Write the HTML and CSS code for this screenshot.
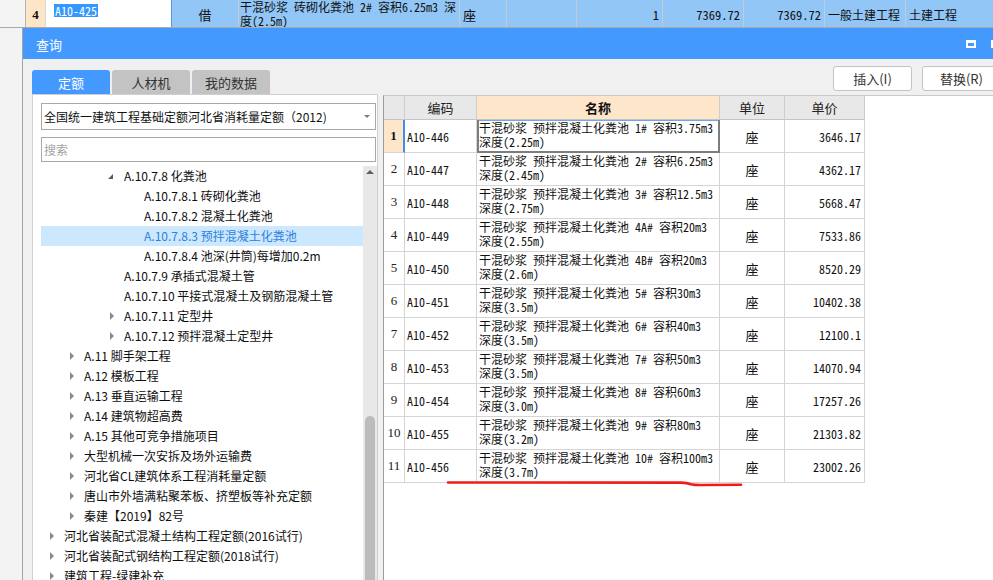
FILE: index.html
```html
<!DOCTYPE html>
<html lang="zh-CN">
<head>
<meta charset="utf-8">
<title>查询</title>
<link rel="stylesheet" href="styles.css">
</head>
<body>
<div class="toprow">
  <div class="tc t-gap"></div>
  <div class="tc t-num">4</div>
  <div class="tc t-code"><span class="sel">A10-425</span></div>
  <div class="tc t-blue t-center t-ui">借</div>
  <div class="tc t-blue t-name">干混砂浆 砖砌化粪池 2# 容积6.25m3 深<br>度(2.5m)</div>
  <div class="tc t-blue t-ui t-left">座</div>
  <div class="tc t-blue"></div>
  <div class="tc t-blue t-right">1</div>
  <div class="tc t-blue t-right">7369.72</div>
  <div class="tc t-blue t-right">7369.72</div>
  <div class="tc t-blue t-ui t-left t-sm">一般土建工程</div>
  <div class="tc t-blue t-ui t-left t-sm">土建工程</div>
</div>

<div class="dialog">
  <div class="titlebar">
    <span class="title">查询</span>
    <span class="maxi"></span>
    <span class="closex"></span>
  </div>
  <div class="dbody">
    <div class="leftcol">
      <div class="tabs">
        <div class="tab active">定额</div>
        <div class="tab">人材机</div>
        <div class="tab">我的数据</div>
      </div>
      <div class="lpanel">
        <div class="select">全国统一建筑工程基础定额河北省消耗量定额（2012)<span class="caret"></span></div>
        <div class="search">搜索</div>
        <div class="treewrap">
          <ul class="tree">
            <li class="l3"><span class="arr open"></span>A.10.7.8 化粪池</li>
            <li class="l4"><span class="arr"></span>A.10.7.8.1 砖砌化粪池</li>
            <li class="l4"><span class="arr"></span>A.10.7.8.2 混凝土化粪池</li>
            <li class="l4 cur"><span class="arr"></span>A.10.7.8.3 预拌混凝土化粪池</li>
            <li class="l4"><span class="arr"></span>A.10.7.8.4 池深(井筒)每增加0.2m</li>
            <li class="l3"><span class="arr"></span>A.10.7.9 承插式混凝土管</li>
            <li class="l3"><span class="arr"></span>A.10.7.10 平接式混凝土及钢筋混凝土管</li>
            <li class="l3"><span class="arr closed"></span>A.10.7.11 定型井</li>
            <li class="l3"><span class="arr closed"></span>A.10.7.12 预拌混凝土定型井</li>
            <li class="l1"><span class="arr closed"></span>A.11 脚手架工程</li>
            <li class="l1"><span class="arr closed"></span>A.12 模板工程</li>
            <li class="l1"><span class="arr closed"></span>A.13 垂直运输工程</li>
            <li class="l1"><span class="arr closed"></span>A.14 建筑物超高费</li>
            <li class="l1"><span class="arr closed"></span>A.15 其他可竞争措施项目</li>
            <li class="l1"><span class="arr closed"></span>大型机械一次安拆及场外运输费</li>
            <li class="l1"><span class="arr closed"></span>河北省CL建筑体系工程消耗量定额</li>
            <li class="l1"><span class="arr closed"></span>唐山市外墙满粘聚苯板、挤塑板等补充定额</li>
            <li class="l1"><span class="arr closed"></span>秦建【2019】82号</li>
            <li class="l0"><span class="arr closed"></span>河北省装配式混凝土结构工程定额(2016试行)</li>
            <li class="l0"><span class="arr closed"></span>河北省装配式钢结构工程定额(2018试行)</li>
            <li class="l0"><span class="arr closed"></span>建筑工程-绿建补充</li>
          </ul>
          <div class="vscroll"><span class="up"></span><span class="thumb"></span></div>
        </div>
      </div>
    </div>
    <div class="rightcol">
      <div class="btns">
        <button class="btn">插入(I)</button>
        <button class="btn">替换(R)</button>
      </div>
      <div class="rpanel">
        <div class="grid">
          <div class="h hn"></div>
          <div class="h">编码</div>
          <div class="h hname">名称</div>
          <div class="h">单位</div>
          <div class="h">单价</div>

          <div class="c rn rsel">1</div><div class="c code">A10-446</div><div class="c name focus">干混砂浆 预拌混凝土化粪池 1# 容积3.75m3<br>深度(2.25m)</div><div class="c unit">座</div><div class="c price">3646.17</div>
          <div class="c rn">2</div><div class="c code">A10-447</div><div class="c name">干混砂浆 预拌混凝土化粪池 2# 容积6.25m3<br>深度(2.45m)</div><div class="c unit">座</div><div class="c price">4362.17</div>
          <div class="c rn">3</div><div class="c code">A10-448</div><div class="c name">干混砂浆 预拌混凝土化粪池 3# 容积12.5m3<br>深度(2.75m)</div><div class="c unit">座</div><div class="c price">5668.47</div>
          <div class="c rn">4</div><div class="c code">A10-449</div><div class="c name">干混砂浆 预拌混凝土化粪池 4A# 容积20m3<br>深度(2.55m)</div><div class="c unit">座</div><div class="c price">7533.86</div>
          <div class="c rn">5</div><div class="c code">A10-450</div><div class="c name">干混砂浆 预拌混凝土化粪池 4B# 容积20m3<br>深度(2.6m)</div><div class="c unit">座</div><div class="c price">8520.29</div>
          <div class="c rn">6</div><div class="c code">A10-451</div><div class="c name">干混砂浆 预拌混凝土化粪池 5# 容积30m3<br>深度(3.5m)</div><div class="c unit">座</div><div class="c price">10402.38</div>
          <div class="c rn">7</div><div class="c code">A10-452</div><div class="c name">干混砂浆 预拌混凝土化粪池 6# 容积40m3<br>深度(3.5m)</div><div class="c unit">座</div><div class="c price">12100.1</div>
          <div class="c rn">8</div><div class="c code">A10-453</div><div class="c name">干混砂浆 预拌混凝土化粪池 7# 容积50m3<br>深度(3.5m)</div><div class="c unit">座</div><div class="c price">14070.94</div>
          <div class="c rn">9</div><div class="c code">A10-454</div><div class="c name">干混砂浆 预拌混凝土化粪池 8# 容积60m3<br>深度(3.0m)</div><div class="c unit">座</div><div class="c price">17257.26</div>
          <div class="c rn">10</div><div class="c code">A10-455</div><div class="c name">干混砂浆 预拌混凝土化粪池 9# 容积80m3<br>深度(3.2m)</div><div class="c unit">座</div><div class="c price">21303.82</div>
          <div class="c rn">11</div><div class="c code">A10-456</div><div class="c name">干混砂浆 预拌混凝土化粪池 10# 容积100m3<br>深度(3.7m)</div><div class="c unit">座</div><div class="c price">23002.26</div>
        </div>
      </div>
    </div>
  </div>
</div>

<svg class="redmark" width="310" height="12" viewBox="0 0 310 12">
  <path d="M7 4.5 L240 4.6 Q246 4.8 250 6.2 Q254 7.2 262 7 L300 6.8" fill="none" stroke="#f01c1c" stroke-width="2.6" stroke-linecap="round"/>
</svg>
</body>
</html>
```

FILE: styles.css
```css
* { box-sizing: border-box; }
html, body { margin: 0; padding: 0; }
body {
  width: 993px;
  height: 580px;
  overflow: hidden;
  position: relative;
  background: #f3f3f3;
  font-family: "Noto Sans CJK SC", "Liberation Sans", sans-serif;
  font-size: 12px;
  color: #111;
}

/* ---------- top grid row (behind the dialog) ---------- */
.toprow {
  display: grid;
  grid-template-columns: 26px 20px 126px 67px 221px 47px 70px 86px 81px 81px 81px 90px;
  height: 28px;
  border-bottom: 1px solid #a9a9a9;
  width: 1100px;
}
.tc {
  border-right: 1px solid #c2ccd6;
  height: 27px;
  white-space: nowrap;
  overflow: hidden;
  font-family: "Noto Sans Mono CJK SC", "Noto Sans CJK SC", monospace;
  font-size: 12px;
}
.t-gap { background: #f4f4f4; border-right: 1px solid #b4b4b4; }
.t-num {
  background: #fde5c8;
  font-family: "Liberation Serif", serif;
  font-weight: bold;
  font-size: 13px;
  display: flex; align-items: center; justify-content: center;
  padding-top: 2px;
  border-right-color: #d8d8d8;
}
.t-code { background: #fff; padding: 2px 0 0 8px; border-right: 1px solid #4f96e6; }
.sel { background: #3399ff; color: #fff; line-height: 13px; display: inline-block; padding: 0 1px; }
.t-blue { background: #92c6f6; }
.t-ui { font-family: "Noto Sans CJK SC", sans-serif; font-size: 13px; }
.t-ui.t-sm { font-size: 12px; }
.t-center { display: flex; align-items: center; justify-content: center; padding-top: 1px; }
.t-left { display: flex; align-items: center; padding-left: 3px; padding-top: 1px; }
.t-right { display: flex; align-items: center; justify-content: flex-end; padding-right: 3px; padding-top: 2px; font-size: 12.5px; }
.t-name { line-height: 14px; padding-left: 1px; }

/* ---------- dialog ---------- */
.dialog {
  margin-left: 22px;
  width: 1000px;
  height: 552px;
  border-left: 1px solid #a3a3a3;
  background: #f0f0f0;
}
.titlebar {
  height: 31px;
  background: #4499ff;
  color: #fff;
  display: flex;
  align-items: center;
  padding: 0 21px 0 13px;
}
.title { font-size: 13px; flex: 1; padding-top: 1px; }
.maxi {
  width: 10px; height: 8px;
  margin-right: 2px;
  border: 2px solid #fff;
  border-top-width: 3px;
}
.closex {
  width: 10px; height: 8px;
  margin-left: 13px;
  border-left: 2px solid #fff;
}

.dbody {
  display: flex;
  padding-left: 9px;
  height: 521px;
}
.leftcol {
  width: 346px;
  padding-top: 11px;
  display: flex;
  flex-direction: column;
}
.tabs { display: flex; gap: 2px; height: 24px; }
.tab {
  width: 78px;
  background: #c3c3c3;
  color: #333;
  border-radius: 3px 3px 0 0;
  font-size: 13px;
  display: flex; align-items: center; justify-content: center;
}
.tab.active { background: #4499ff; color: #fff; }

.lpanel {
  flex: 1;
  background: #fff;
  border: 1px solid #cfcfcf;
  border-bottom: none;
  padding: 8px 0 0 8px;
  overflow: hidden;
}
.select {
  width: 335px;
  height: 27px;
  border: 1px solid #a9a9a9;
  padding-left: 2px;
  line-height: 25px;
  font-size: 12px;
  color: #111;
  position: relative;
  white-space: nowrap;
}
.caret {
  position: absolute;
  right: 5px; top: 11px;
  border-left: 3px solid transparent;
  border-right: 3px solid transparent;
  border-top: 3px solid #7a7a7a;
}
.search {
  width: 335px;
  height: 25px;
  margin-top: 7px;
  border: 1px solid #a9a9a9;
  padding-left: 2px;
  line-height: 23px;
  color: #a3a3a3;
  font-size: 12px;
}
.treewrap {
  margin-top: 4px;
  display: flex;
  height: 440px;
}
.tree {
  list-style: none;
  margin: 0; padding: 0;
  width: 322px;
}
.tree li {
  height: 20px;
  line-height: 20px;
  display: flex;
  align-items: center;
  white-space: nowrap;
  font-size: 12px;
  color: #0e0e0e;
}
.tree li.cur { background: #cce8ff; color: #2f7fdc; }
.l0 { padding-left: 9px; }
.l1 { padding-left: 29px; }
.l3 { padding-left: 69px; }
.l4 { padding-left: 89px; }
.arr { width: 14px; height: 20px; position: relative; flex: none; }
.arr.closed::before {
  content: "";
  position: absolute;
  left: 0; top: 6px;
  border-top: 4px solid transparent;
  border-bottom: 4px solid transparent;
  border-left: 4px solid #8a8a8a;
}
.arr.open::before {
  content: "";
  position: absolute;
  left: -2px; top: 8px;
  border-left: 5px solid transparent;
  border-bottom: 5px solid #5c5c5c;
}
.vscroll {
  width: 14px;
  background: #e8e8e8;
  display: flex;
  flex-direction: column;
  align-items: center;
}
.up {
  margin-top: 4px;
  border-left: 4px solid transparent;
  border-right: 4px solid transparent;
  border-bottom: 4px solid #606060;
}
.thumb {
  margin-top: 242px;
  width: 10px;
  height: 200px;
  background: #bcbcbc;
  border-radius: 5px 5px 0 0;
}

/* ---------- right column ---------- */
.rightcol {
  flex: 1;
  margin-left: 5px;
  padding-top: 7px;
  display: flex;
  flex-direction: column;
}
.btns {
  display: flex;
  justify-content: flex-end;
  gap: 10px;
  padding-right: 21px;
  height: 25px;
  margin-bottom: 4px;
}
.btn {
  width: 79px;
  height: 25px;
  background: #fff;
  border: 1px solid #c4c4c4;
  border-radius: 3px;
  font-family: "Noto Sans CJK SC", sans-serif;
  font-size: 13px;
  color: #333;
  padding: 0;
}
.rpanel {
  flex: 1;
  background: #fff;
  border-top: 1px solid #c9c9c9;
  border-left: 1px solid #9c9c9c;
}
.grid {
  display: grid;
  grid-template-columns: 21px 72px 243px 65px 80px;
  width: 481px;
}
.h {
  height: 24px;
  background: #e8e8e8;
  border-right: 1px solid #cdcdcd;
  border-bottom: 1px solid #c4c4c4;
  font-size: 13px;
  display: flex; align-items: center; justify-content: center;
  color: #222;
}
.h.hname { background: #fde6c9; font-weight: bold; color: #111; }
.c {
  height: 33px;
  border-right: 1px solid #d5d5d5;
  border-bottom: 1px solid #d5d5d5;
  font-family: "Noto Sans Mono CJK SC", "Noto Sans CJK SC", monospace;
  font-size: 12px;
  white-space: nowrap;
  overflow: hidden;
}
.rn {
  font-family: "Liberation Serif", serif;
  font-size: 13px;
  display: flex; align-items: center; justify-content: center;
  color: #222;
}
.rn.rsel {
  background: #fde6c9;
  font-weight: bold;
  border-right: 2px solid #3f8fe8;
  color: #111;
}
.code { display: flex; align-items: center; padding-left: 2px; }
.name { line-height: 14px; padding: 1px 0 0 2px; }
.name.focus {
  border-right-color: #7d7d7d;
  border-bottom-color: #7d7d7d;
  box-shadow: inset 2px 0 0 #7d7d7d, inset -1px 0 0 #7d7d7d, inset 0 -1px 0 #7d7d7d, inset 0 1px 0 #6aa8ea;
}
.unit { display: flex; align-items: center; justify-content: center; font-family: "Noto Sans CJK SC", sans-serif; font-size: 13px; }
.price { display: flex; align-items: center; justify-content: flex-end; padding-right: 3px; }

.redmark {
  position: absolute;
  left: 441px;
  top: 478px;
}
```
